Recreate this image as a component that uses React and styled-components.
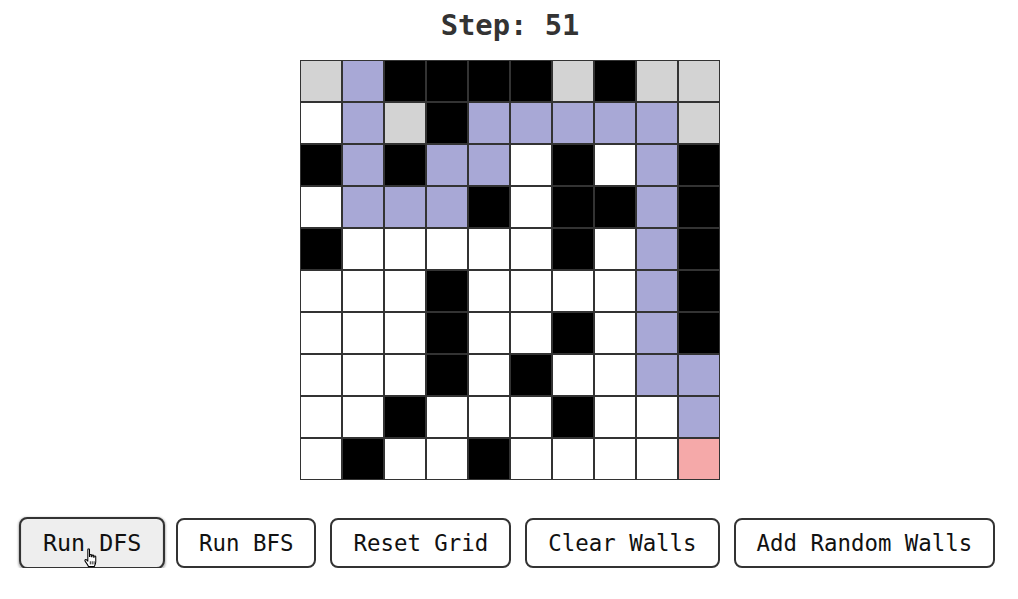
import React from "react";
import styled, { createGlobalStyle } from "styled-components";

const Global = createGlobalStyle`
  html, body { margin: 0; padding: 0; background: #fff; }
  body { font-family: "DejaVu Sans Mono", "Liberation Mono", monospace; }
`;

const Page = styled.div`
  display: flex;
  flex-direction: column;
  align-items: center;
  padding-top: 8px;
  padding-left: 2px;
`;

const Title = styled.h2`
  margin: 0 0 18px;
  font-size: 28.8px;
  line-height: 34px;
  font-weight: bold;
  color: #333;
`;

const Board = styled.div`
  display: grid;
  grid-template-columns: repeat(10, 42px);
  grid-auto-rows: 42px;
  width: 420px;
`;

const COLORS = {
  w: "#ffffff",
  b: "#000000",
  g: "#d3d3d3",
  p: "#a8a8d6",
  r: "#f5a9a9",
};

const Cell = styled.div`
  box-sizing: border-box;
  border: 1px solid #333;
  background: ${(p) => COLORS[p.$kind]};
`;

const Controls = styled.div`
  display: flex;
  gap: 14px;
  margin-top: 38px;
  margin-left: -3px;
`;

const Button = styled.button`
  position: relative;
  font-family: inherit;
  font-size: 22.4px;
  line-height: 26px;
  padding: 10px 21px;
  border: 2px solid #333;
  border-radius: 8px;
  color: #111;
  background: ${(p) => (p.$hover ? "#eee" : "#fff")};
  transform: ${(p) => (p.$hover ? "scale(1.043)" : "none")};
  box-shadow: ${(p) => (p.$hover ? "0 1px 2px rgba(0,0,0,0.25)" : "none")};
  cursor: pointer;
  white-space: pre;
`;

const Cursor = styled.svg`
  position: absolute;
  left: 60px;
  top: 28px;
  width: 15px;
  height: 19px;
  pointer-events: none;
`;

const MAP = [
  "gpbbbbgbgg",
  "wpgbpppppg",
  "bpbppwbwpb",
  "wpppbwbbpb",
  "bwwwwwbwpb",
  "wwwbwwwwpb",
  "wwwbwwbwpb",
  "wwwbwbwwpp",
  "wwbwwwbwwp",
  "wbwwbwwwwr",
];

const HandCursor = () => (
  <Cursor viewBox="0 0 15 19">
    <path
      d="M4 1.2 C4 0.4 5.6 0.4 5.6 1.2 L5.6 8 L6 8 L6 6.6 C6 5.8 7.6 5.8 7.6 6.6 L7.6 8.2 L8 8.2 L8 7.2 C8 6.4 9.6 6.4 9.6 7.2 L9.6 8.6 L10 8.6 L10 8 C10 7.2 11.6 7.2 11.6 8 L11.6 13 C11.6 15 10.6 16.5 10.2 17.5 L4.6 17.5 C4 16 2.4 14 1.4 12.4 C0.8 11.4 1.6 10.4 2.6 11 L4 12.4 Z"
      fill="#fff"
      stroke="#000"
      strokeWidth="1"
      strokeLinejoin="round"
    />
    <path d="M6.4 12.5 L6.4 15.5 M8.2 12.5 L8.2 15.5 M10 12.5 L10 15.5" stroke="#000" strokeWidth="0.8" />
  </Cursor>
);

export default function App() {
  const buttons = ["Run DFS", "Run BFS", "Reset Grid", "Clear Walls", "Add Random Walls"];
  return (
    <>
      <Global />
      <Page>
        <Title>Step: 51</Title>
        <Board>
          {MAP.map((row, r) =>
            row.split("").map((k, c) => <Cell key={`${r}-${c}`} $kind={k} />)
          )}
        </Board>
        <Controls>
          {buttons.map((label, i) => (
            <Button key={label} $hover={i === 0}>
              {label}
              {i === 0 && <HandCursor />}
            </Button>
          ))}
        </Controls>
      </Page>
    </>
  );
}
